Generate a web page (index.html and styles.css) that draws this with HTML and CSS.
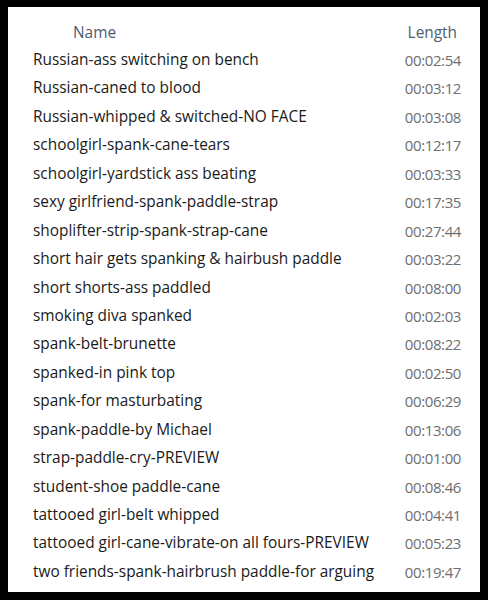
FILE: index.html
```html
<!DOCTYPE html>
<html lang="en">
<head>
    <meta charset="UTF-8">
    <title>Files</title>
    <link rel="stylesheet" href="styles.css">
</head>
<body>
    <div class="panel">
        <div class="header">
            <span class="col-name">Name</span>
            <span class="col-length">Length</span>
        </div>
        <div class="list">
            <div class="row"><span class="name">Russian-ass switching on bench</span><span class="time">00:02:54</span></div>
            <div class="row"><span class="name">Russian-caned to blood</span><span class="time">00:03:12</span></div>
            <div class="row"><span class="name">Russian-whipped &amp; switched-NO FACE</span><span class="time">00:03:08</span></div>
            <div class="row"><span class="name">schoolgirl-spank-cane-tears</span><span class="time">00:12:17</span></div>
            <div class="row"><span class="name">schoolgirl-yardstick ass beating</span><span class="time">00:03:33</span></div>
            <div class="row"><span class="name">sexy girlfriend-spank-paddle-strap</span><span class="time">00:17:35</span></div>
            <div class="row"><span class="name">shoplifter-strip-spank-strap-cane</span><span class="time">00:27:44</span></div>
            <div class="row"><span class="name">short hair gets spanking &amp; hairbush paddle</span><span class="time">00:03:22</span></div>
            <div class="row"><span class="name">short shorts-ass paddled</span><span class="time">00:08:00</span></div>
            <div class="row"><span class="name">smoking diva spanked</span><span class="time">00:02:03</span></div>
            <div class="row"><span class="name">spank-belt-brunette</span><span class="time">00:08:22</span></div>
            <div class="row"><span class="name">spanked-in pink top</span><span class="time">00:02:50</span></div>
            <div class="row"><span class="name">spank-for masturbating</span><span class="time">00:06:29</span></div>
            <div class="row"><span class="name">spank-paddle-by Michael</span><span class="time">00:13:06</span></div>
            <div class="row"><span class="name">strap-paddle-cry-PREVIEW</span><span class="time">00:01:00</span></div>
            <div class="row"><span class="name">student-shoe paddle-cane</span><span class="time">00:08:46</span></div>
            <div class="row"><span class="name">tattooed girl-belt whipped</span><span class="time">00:04:41</span></div>
            <div class="row"><span class="name">tattooed girl-cane-vibrate-on all fours-PREVIEW</span><span class="time">00:05:23</span></div>
            <div class="row"><span class="name">two friends-spank-hairbrush paddle-for arguing</span><span class="time">00:19:47</span></div>
        </div>
    </div>
</body>
</html>
```

FILE: styles.css
```css
html, body {
    margin: 0;
    padding: 0;
    background: #000;
}
body {
    padding: 7px 8px 8px 8px;
    font-family: "Open Sans", "Noto Sans", sans-serif;
    font-size: 15.4px;
}
.panel {
    background: #fff;
    height: 585px;
    box-sizing: border-box;
    padding: 15px 19px 0 25px;
}
.header {
    display: flex;
    justify-content: space-between;
    color: #4d5d75;
    height: 24px;
    line-height: 22px;
}
.col-name {
    margin-left: 40px;
}
.col-length {
    margin-right: 4px;
}
.row {
    display: flex;
    justify-content: space-between;
    height: 28.45px;
    line-height: 28.45px;
}
.name {
    color: #1a1a1a;
}
.time {
    color: #6e6e6e;
    font-size: 15px;
    letter-spacing: -0.4px;
}
```
